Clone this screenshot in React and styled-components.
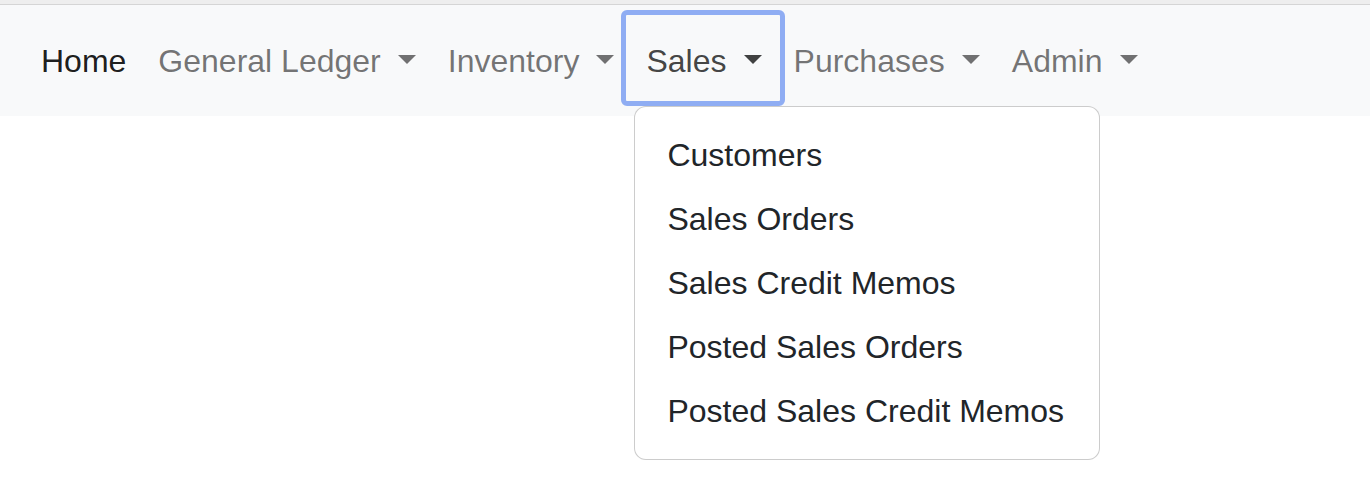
import styled, { createGlobalStyle } from "styled-components";

const GlobalStyle = createGlobalStyle`
  body {
    margin: 0;
    background: #fff;
    font-family: "Liberation Sans", Arial, sans-serif;
  }
`;

const Page = styled.div`
  min-height: 490px;
  background: #fff;
`;

const TopStrip = styled.div`
  height: 4px;
  background: #eeeeee;
  border-bottom: 1px solid #d5d5d5;
`;

const Navbar = styled.nav`
  background: #f8f9fa;
  padding: 16px 24px 15px 25px;
`;

const NavList = styled.ul`
  display: flex;
  align-items: center;
  list-style: none;
  margin: 0;
  padding: 0;
`;

const NavItem = styled.li`
  position: relative;
`;

const NavLink = styled.a`
  position: relative;
  display: block;
  padding: 16px;
  font-size: 32px;
  line-height: 48px;
  text-decoration: none;
  white-space: pre;
  cursor: pointer;
  color: ${(p) => (p.$home ? "rgba(0,0,0,0.9)" : p.$open ? "rgba(0,0,0,0.74)" : "rgba(0,0,0,0.55)")};

  ${(p) =>
    p.$open &&
    `
    &::before {
      content: "";
      position: absolute;
      top: -11px;
      bottom: -5px;
      left: -9px;
      right: -7px;
      border: 5px solid #8fadf3;
      border-radius: 6px;
      pointer-events: none;
    }
  `}
`;

const Caret = styled.span`
  display: inline-block;
  margin-left: 0.255em;
  vertical-align: 0.255em;
  border-top: 0.3em solid;
  border-right: 0.3em solid transparent;
  border-left: 0.3em solid transparent;
  border-bottom: 0;
`;

const Menu = styled.ul`
  position: absolute;
  top: calc(100% + 5px);
  left: 4px;
  z-index: 2;
  width: 464px;
  margin: 0;
  padding: 16px 0;
  list-style: none;
  background: #fff;
  border: 1px solid rgba(0, 0, 0, 0.2);
  border-radius: 12px;
`;

const MenuItem = styled.li`
  padding: 8px 32px;
  font-size: 32px;
  line-height: 48px;
  color: #212529;
  white-space: nowrap;
`;

const menus = [
  { label: "Home", home: true },
  { label: "General Ledger", dropdown: true },
  { label: "Inventory", dropdown: true },
  {
    label: "Sales",
    dropdown: true,
    open: true,
    items: [
      "Customers",
      "Sales Orders",
      "Sales Credit Memos",
      "Posted Sales Orders",
      "Posted Sales Credit Memos",
    ],
  },
  { label: "Purchases", dropdown: true },
  { label: "Admin", dropdown: true },
];

export default function App() {
  return (
    <Page>
      <GlobalStyle />
      <TopStrip />
      <Navbar>
        <NavList>
          {menus.map((m) => (
            <NavItem key={m.label}>
              <NavLink $home={m.home} $open={m.open}>
                {m.dropdown ? m.label + " " : m.label}
                {m.dropdown && <Caret />}
              </NavLink>
              {m.open && (
                <Menu>
                  {m.items.map((it) => (
                    <MenuItem key={it}>{it}</MenuItem>
                  ))}
                </Menu>
              )}
            </NavItem>
          ))}
        </NavList>
      </Navbar>
    </Page>
  );
}
